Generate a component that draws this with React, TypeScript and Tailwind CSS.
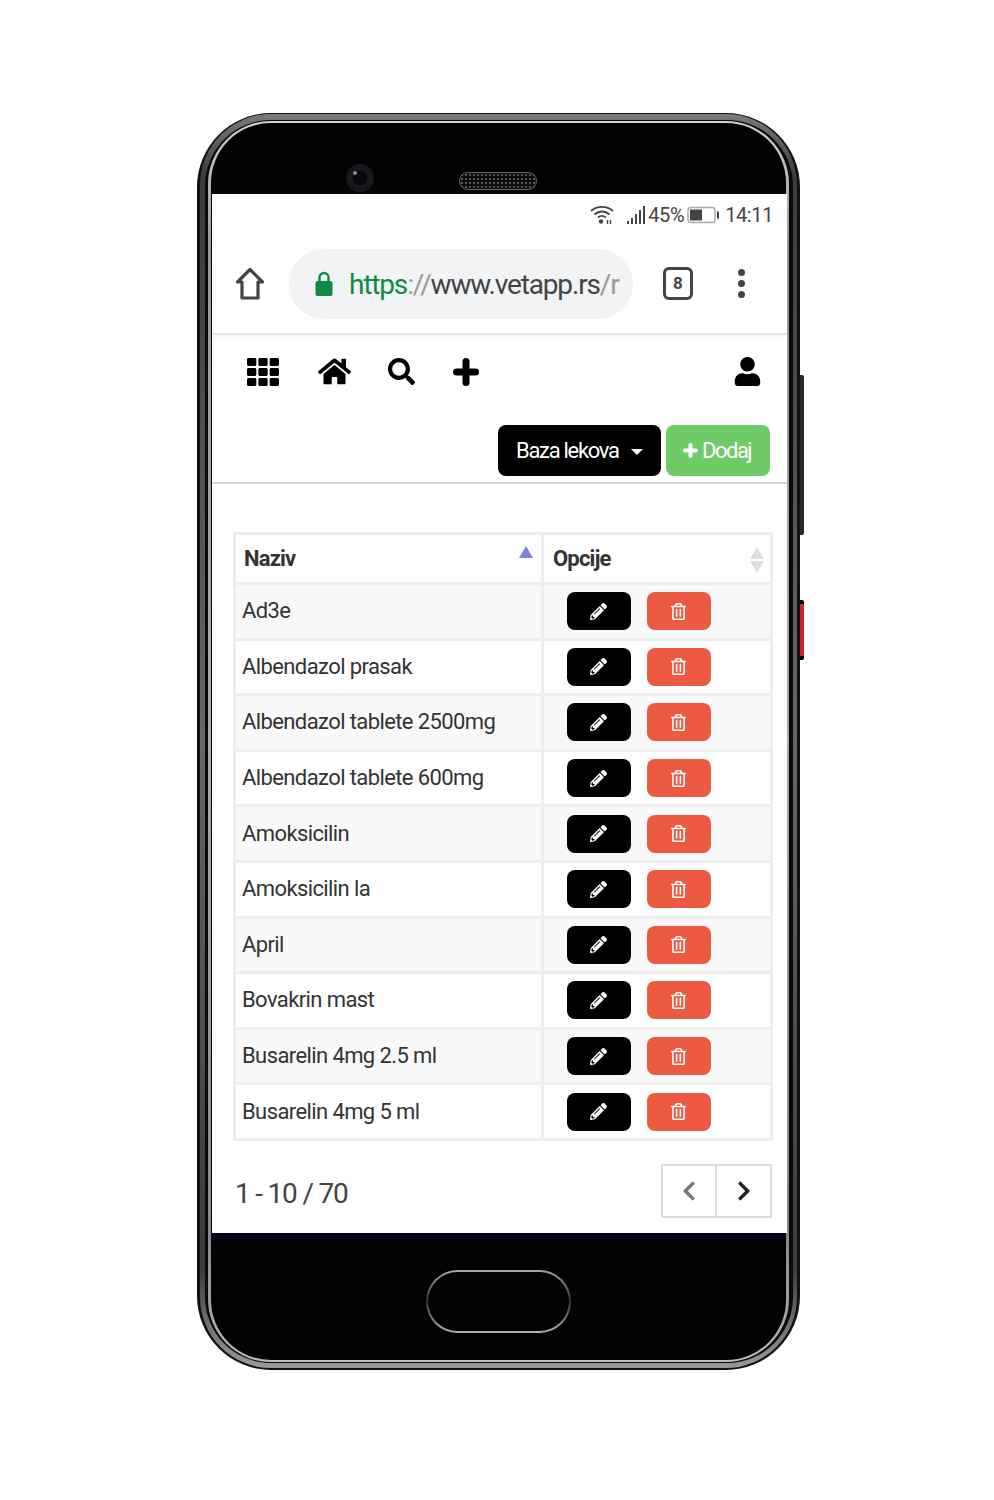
import { FaTh, FaHome, FaSearch, FaUser, FaPencilAlt, FaRegTrashAlt, FaChevronLeft, FaChevronRight } from 'react-icons/fa';

const drugs = [
  'Ad3e',
  'Albendazol prasak',
  'Albendazol tablete 2500mg',
  'Albendazol tablete 600mg',
  'Amoksicilin',
  'Amoksicilin la',
  'April',
  'Bovakrin mast',
  'Busarelin 4mg 2.5 ml',
  'Busarelin 4mg 5 ml',
];

function StatusBar() {
  return (
    <div className="h-[40px] flex items-center justify-end gap-[5px] pr-[14px] pt-[2px] text-[#444] text-[20px] tracking-[-0.4px]">
      {/* wifi */}
      <svg width="24" height="20" viewBox="0 0 24 20" className="mr-[7px]" fill="none" stroke="#444" strokeWidth="1.8">
        <path d="M1 6 C7 0.5 17 0.5 23 6" />
        <path d="M4.5 9.5 C9 5.5 15 5.5 19.5 9.5" />
        <path d="M8 12.5 C10.5 10.5 13.5 10.5 16 12.5" />
        <circle cx="11" cy="16.5" r="2.2" fill="#444" stroke="none" />
        <path d="M17.5 15 v4 M20.5 15 v4" strokeWidth="1.4" />
      </svg>
      {/* signal */}
      <svg width="20" height="20" viewBox="0 0 20 20" fill="#444" className="-mr-[3px]">
        <rect x="1" y="16" width="2" height="3" />
        <rect x="5" y="13" width="2" height="6" />
        <rect x="9" y="9" width="2" height="10" />
        <rect x="13" y="5" width="2" height="14" />
        <rect x="17" y="1" width="2" height="18" />
      </svg>
      <span className="-mr-[2px]">45%</span>
      {/* battery */}
      <svg width="33" height="18" viewBox="0 0 33 18" fill="none">
        <rect x="1" y="1.5" width="27" height="15" rx="3" stroke="#aaa" strokeWidth="1.5" />
        <rect x="3" y="3.5" width="12" height="11" fill="#444" />
        <rect x="30" y="5.5" width="2" height="7" fill="#444" />
      </svg>
      <span>14:11</span>
    </div>
  );
}

function UrlBar() {
  return (
    <div className="h-[101px] flex items-center border-b-2 border-[#e8e8e8] shadow-[0_2px_4px_rgba(0,0,0,0.05)]">
      <svg width="30" height="34" viewBox="0 0 30 34" fill="none" stroke="#444" strokeWidth="3.2" strokeLinejoin="round" className="ml-[23px] mr-[24px]">
        <path d="M15 2.5 L27.5 15 H23 V31 H7 V15 H2.5 Z" />
      </svg>
      <div className="w-[344px] h-[70px] rounded-full bg-[#f1f3f4] flex items-center pl-[26px] overflow-hidden">
        <svg width="18" height="26" viewBox="0 0 18 26" className="mr-[16px] shrink-0">
          <path d="M4.5 11 V6.5 a4.5 4.5 0 0 1 9 0 V11" fill="none" stroke="#0f8a46" strokeWidth="2.4" />
          <rect x="0.5" y="10" width="17" height="15" rx="2" fill="#0f8a46" />
        </svg>
        <span className="text-[28px] tracking-[-1.15px] whitespace-nowrap text-[#444] pt-[3px]">
          <span className="text-[#0f8a46]">https</span>
          <span className="text-[#9a9a9a]">://</span>
          www.vetapp.rs
          <span className="text-[#9a9a9a]">/r</span>
        </span>
      </div>
      <div className="ml-[30px] w-[30px] h-[33px] rounded-[6px] border-[3px] border-[#444] flex items-center justify-center text-[17px] font-bold text-[#444]">
        8
      </div>
      <div className="ml-[45px] flex flex-col gap-[4px]">
        <div className="w-[7px] h-[7px] rounded-full bg-[#444]" />
        <div className="w-[7px] h-[7px] rounded-full bg-[#444]" />
        <div className="w-[7px] h-[7px] rounded-full bg-[#444]" />
      </div>
    </div>
  );
}

function Toolbar() {
  return (
    <div className="h-[149px] border-b-2 border-[#d5d5d5] flex flex-col">
      <div className="h-[73px] flex items-center text-black pl-[35px] pr-[25px]">
        <FaTh className="text-[32px]" />
        <FaHome className="text-[33px] ml-[39px]" />
        <FaSearch className="text-[27px] ml-[37px]" />
        <svg width="26" height="28" viewBox="0 0 26 28" className="ml-[38px]" fill="none" stroke="#000" strokeWidth="7" strokeLinecap="round">
          <path d="M13 3.5 V24.5 M3.5 14 H22.5" />
        </svg>
        <FaUser className="text-[29px] ml-auto" />
      </div>
      <div className="mt-[17px] flex justify-end gap-[5px] pr-[17px]">
        <button className="w-[163px] h-[51px] rounded-[8px] bg-black text-white text-[22px] tracking-[-1.3px] flex items-center pl-[18px]">
          Baza lekova
          <span className="ml-[12px] w-0 h-0 border-x-[6px] border-x-transparent border-t-[6px] border-t-white mt-[3px]" />
        </button>
        <button className="w-[104px] h-[51px] rounded-[8px] bg-[#6fcb67] text-white text-[22px] tracking-[-1.5px] flex items-center pl-[17px] gap-[4px]">
          <svg width="15" height="15" viewBox="0 0 15 15" fill="none" stroke="#fff" strokeWidth="4" strokeLinecap="round">
            <path d="M7.5 2 V13 M2 7.5 H13" />
          </svg>
          Dodaj
        </button>
      </div>
    </div>
  );
}

function DrugTable() {
  return (
    <table className="ml-[21px] w-[540px] table-fixed border-collapse mt-[48px] text-[22px] tracking-[-0.6px] text-[#333]">
      <thead>
        <tr className="h-[50px]">
          <th className="w-[308px] border-[3px] border-[#eeeeee] text-left pl-[8px] pb-[1px] font-bold tracking-[-0.8px] relative">
            Naziv
            <span className="absolute right-[8px] top-[11px] w-0 h-0 border-x-[7px] border-x-transparent border-b-[12px] border-b-[#7b83e0]" />
          </th>
          <th className="border-[3px] border-[#eeeeee] text-left pl-[9px] pb-[1px] font-bold tracking-[-0.8px] relative">
            Opcije
            <span className="absolute right-[6px] top-[12px] w-0 h-0 border-x-[7px] border-x-transparent border-b-[12px] border-b-[#dddddd]" />
            <span className="absolute right-[6px] top-[26px] w-0 h-0 border-x-[7px] border-x-transparent border-t-[12px] border-t-[#dddddd]" />
          </th>
        </tr>
      </thead>
      <tbody>
        {drugs.map((name, i) => (
          <tr key={name} className={i % 2 === 0 ? 'h-[55.6px] bg-[#f9f9f9]' : 'h-[55.6px] bg-white'}>
            <td className="border-[3px] border-[#eeeeee] pl-[6px] pb-[1px]">{name}</td>
            <td className="border-[3px] border-[#eeeeee]">
              <div className="flex gap-[16px] pl-[23px]">
                <button className="w-[64px] h-[38px] rounded-[8px] bg-black text-white flex items-center justify-center pr-[1px]">
                  <FaPencilAlt className="text-[17px]" />
                </button>
                <button className="w-[64px] h-[38px] rounded-[8px] bg-[#ec5a41] text-white flex items-center justify-center pr-[1px]">
                  <FaRegTrashAlt className="text-[17px]" />
                </button>
              </div>
            </td>
          </tr>
        ))}
      </tbody>
    </table>
  );
}

function Pagination() {
  return (
    <div className="mt-[23px] ml-[23px] mr-[15px] flex items-center justify-between">
      <span className="text-[28px] tracking-[-1.2px] text-[#444] pt-[6px]">1 - 10 / 70</span>
      <div className="flex border-2 border-[#dddddd] h-[54px]">
        <div className="w-[54px] flex items-center justify-center border-r-2 border-[#dddddd] text-[#777]">
          <FaChevronLeft className="text-[22px]" />
        </div>
        <div className="w-[53px] flex items-center justify-center text-[#222]">
          <FaChevronRight className="text-[22px]" />
        </div>
      </div>
    </div>
  );
}

export default function App() {
  return (
    <div className="h-[1500px] bg-white pt-[113px] pl-[197px] font-['Roboto',sans-serif]">
      {/* PHONE BODY */}
      <div className="relative w-[603px] h-[1257px] rounded-[74px] bg-[#111] pt-[1px] pb-[2px] pl-[3px] pr-[3px]">
        {/* side buttons */}
        <div className="absolute right-[-4px] top-[262px] w-[4px] h-[160px] bg-[#2a2a2a] rounded-r-[2px]" />
        <div className="absolute right-[-4px] top-[487px] w-[4px] h-[60px] bg-[#c8262c] border-y-[4px] border-black rounded-r-[2px]" />

        <div className="h-full rounded-[71px] bg-[linear-gradient(180deg,#7a7a7a_0%,#3a3a3a_5%,#666_50%,#3a3a3a_92%,#999_100%)] pt-[6px] pb-[5px] pl-[5px] pr-[4px]">
          <div className="h-full rounded-[66px] bg-[#0a0a0a] pt-[1px] pb-[1px] pl-[3px] pr-[4px]">
            <div className="h-full rounded-[63px] bg-[linear-gradient(180deg,#d0d0d0_0%,#999_10%,#aaa_50%,#888_90%,#bbb_100%)] pt-[2px] pb-[2px] px-[3px]">
              <div className="h-full rounded-[60px] bg-[#020204] flex flex-col">
                {/* top bezel */}
                <div className="h-[71px] shrink-0 flex items-end pl-[135px] pb-[2px]">
                  <div className="w-[28px] h-[28px] rounded-full bg-[#17171c] flex items-center justify-center">
                    <div className="w-[14px] h-[14px] rounded-full bg-[#08080c] flex items-start justify-start">
                      <div className="w-[4px] h-[4px] rounded-full bg-[#8a8aa0]" />
                    </div>
                  </div>
                  <div className="ml-[85px] mb-[2px] w-[78px] h-[18px] rounded-full border border-[#666] bg-[radial-gradient(#555_1px,#0c0c0c_1px)] bg-[length:4px_4px]" />
                </div>

                {/* SCREEN */}
                <div className="ml-[1px] -mr-[1px] h-[1039px] shrink-0 bg-white flex flex-col">
                  <StatusBar />
                  <UrlBar />
                  <Toolbar />
                  <DrugTable />
                  <Pagination />
                </div>

                {/* bottom bezel */}
                <div className="flex-1 border-t-[6px] border-[#00001c] flex justify-center pt-[31px]">
                  <div className="w-[145px] h-[63px] rounded-full bg-[linear-gradient(180deg,#a8a8a8,#333_50%,#b5b5b5)] p-[2px]">
                    <div className="h-full rounded-full bg-[#020204]" />
                  </div>
                </div>
              </div>
            </div>
          </div>
        </div>
      </div>
    </div>
  );
}
